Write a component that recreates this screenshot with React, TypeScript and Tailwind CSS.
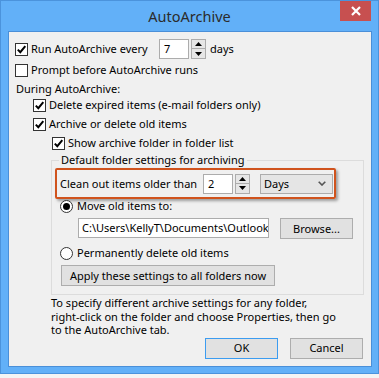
import React from 'react';

const font = { fontFamily: '"Noto Sans", "Open Sans", sans-serif' };

const Check: React.FC<{ checked?: boolean }> = ({ checked }) => (
  <span className="w-[13px] h-[13px] border border-[#333333] bg-white flex items-center justify-center shrink-0">
    {checked && (
      <svg width="11" height="11" viewBox="0 0 11 11">
        <path d="M1.8 5.6 L4.3 8.2 L9.3 2.2" fill="none" stroke="#000" strokeWidth="2" />
      </svg>
    )}
  </span>
);

const Radio: React.FC<{ checked?: boolean }> = ({ checked }) => (
  <span className="w-[13px] h-[13px] rounded-full border border-[#333333] bg-white flex items-center justify-center shrink-0">
    {checked && <span className="w-[7px] h-[7px] rounded-full bg-black" />}
  </span>
);

const Spin: React.FC = () => (
  <div className="flex flex-col w-[15px] h-[20px] ml-[2px]">
    <div className="h-[10px] border border-[#acacac] bg-[#e6e6e6] flex items-center justify-center">
      <svg width="7" height="4" viewBox="0 0 7 4"><path d="M0 4 L3.5 0 L7 4 Z" fill="#000" /></svg>
    </div>
    <div className="h-[10px] border border-t-0 border-[#acacac] bg-[#e6e6e6] flex items-center justify-center">
      <svg width="7" height="4" viewBox="0 0 7 4"><path d="M0 0 L3.5 4 L7 0 Z" fill="#000" /></svg>
    </div>
  </div>
);

const Btn: React.FC<{ w: string; label: string; primary?: boolean }> = ({ w, label, primary }) => (
  <div
    className={`${w} h-[21px] flex items-center justify-center bg-[#e1e1e1] border whitespace-nowrap ${
      primary ? 'border-[#3c9cf0]' : 'border-[#adadad]'
    }`}
  >
    {label}
  </div>
);

export default function App() {
  return (
    <div className="w-[379px] h-[378px] bg-[#f4f4f4] text-[11px] leading-[16px] text-black" style={font}>
      <div className="w-[379px] h-[374px] border border-[#4b93dc] bg-[#62b0f8] flex flex-col">
        {/* title bar */}
        <div className="relative h-[30px] flex items-center justify-center">
          <span className="text-[14.5px] text-[#2b2b2b] -mt-[1px]">AutoArchive</span>
          <div className="absolute right-[7px] top-0 w-[31px] h-[20px] bg-[#c75050] flex items-center justify-center">
            <svg width="10" height="10" viewBox="0 0 10 10">
              <path d="M1 1 L9 9 M9 1 L1 9" stroke="#fff" strokeWidth="2.2" />
            </svg>
          </div>
        </div>

        {/* client area */}
        <div className="ml-[7px] mr-[6px] h-[336px] border border-[#4a8fd8] bg-[#f0f0f0] flex flex-col pt-[7px]">
          <div className="flex items-center h-[20px] pl-[6px]">
            <div className="w-[144px] flex items-center gap-[3px]">
              <Check checked />
              <span>Run AutoArchive every</span>
            </div>
            <div className="w-[30px] h-[20px] border border-[#acacac] bg-white flex items-center pl-[4px]">7</div>
            <Spin />
            <span className="ml-[4px]">days</span>
          </div>

          <div className="flex items-center h-[16px] mt-[3px] pl-[6px] gap-[3px]">
            <Check />
            <span>Prompt before AutoArchive runs</span>
          </div>

          <div className="flex items-center h-[16px] mt-[3px] pl-[7px]">During AutoArchive:</div>

          <div className="flex items-center h-[16px] pl-[24px] gap-[3px]">
            <Check checked />
            <span>Delete expired items (e-mail folders only)</span>
          </div>

          <div className="flex items-center h-[16px] mt-[3px] pl-[24px] gap-[3px]">
            <Check checked />
            <span>Archive or delete old items</span>
          </div>

          <div className="flex items-center h-[16px] mt-[3px] pl-[43px] gap-[3px]">
            <Check checked />
            <span>Show archive folder in folder list</span>
          </div>

          <fieldset className="ml-[42px] w-[313px] mt-[1px] border border-[#dcdcdc] pb-[8px] flex flex-col">
            <legend className="ml-[7px] px-[2px] leading-[16px]">Default folder settings for archiving</legend>

            <div className="ml-[3px] w-[281px] h-[31px] border-2 border-[#d0531d] rounded-[2px] shadow-[2px_2px_3px_rgba(0,0,0,0.35)] flex items-center pl-[3px]">
              <span className="w-[143px] whitespace-nowrap">Clean out items older than</span>
              <div className="w-[30px] h-[20px] border border-[#acacac] bg-white flex items-center pl-[4px]">2</div>
              <Spin />
              <div className="ml-[10px] w-[73px] h-[20px] border border-[#acacac] bg-[#e5e5e5] flex items-center justify-between pl-[3px] pr-[6px]">
                <span>Days</span>
                <svg width="8" height="5" viewBox="0 0 8 5">
                  <path d="M0.7 0.7 L4 4 L7.3 0.7" fill="none" stroke="#555" strokeWidth="1.6" />
                </svg>
              </div>
            </div>

            <div className="flex items-center h-[14px] ml-[8px] gap-[4px]">
              <Radio checked />
              <span>Move old items to:</span>
            </div>

            <div className="flex items-center mt-[4px] ml-[26px]">
              <div className="w-[191px] h-[20px] border border-[#acacac] bg-white flex items-center pl-[3px] overflow-hidden whitespace-nowrap">
                C:\Users\KellyT\Documents\Outlook
              </div>
              <div className="ml-[11px] mt-[1px]">
                <Btn w="w-[73px]" label="Browse..." />
              </div>
            </div>

            <div className="flex items-center h-[14px] mt-[7px] ml-[8px] gap-[4px]">
              <Radio />
              <span>Permanently delete old items</span>
            </div>

            <div className="mt-[5px] ml-[9px]">
              <Btn w="w-[214px]" label="Apply these settings to all folders now" />
            </div>
          </fieldset>

          <p className="ml-[42px] mt-[1px] leading-[13.5px]">
            To specify different archive settings for any folder,
            <br />
            right-click on the folder and choose Properties, then go
            <br />
            to the AutoArchive tab.
          </p>

          <div className="flex justify-end gap-[12px] pr-[8px] mt-[1px]">
            <Btn w="w-[73px]" label="OK" primary />
            <Btn w="w-[73px]" label="Cancel" />
          </div>
        </div>
      </div>
    </div>
  );
}
